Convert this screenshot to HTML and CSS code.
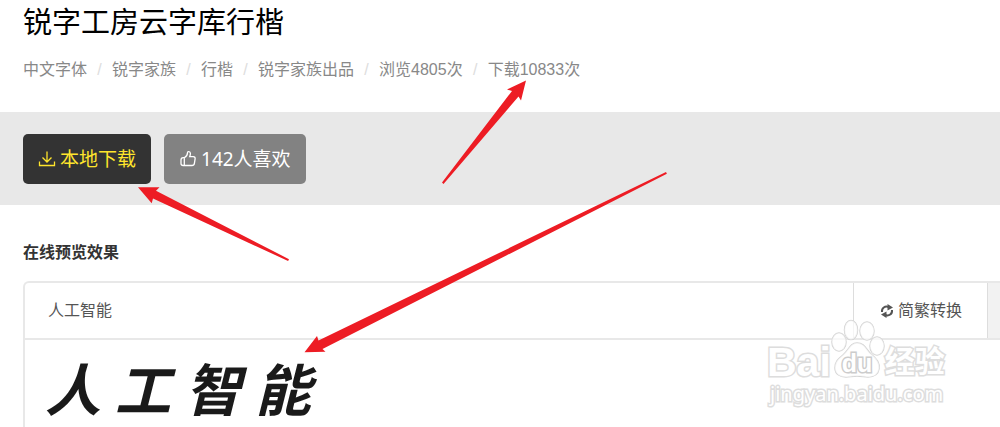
FILE: index.html
```html
<!DOCTYPE html>
<html lang="zh-CN">
<head>
<meta charset="utf-8">
<meta name="viewport" content="width=device-width, initial-scale=1">
<title>锐字工房云字库行楷</title>
<link rel="stylesheet" href="styles.css">
</head>
<body>
<header class="head">
  <h1 class="title">锐字工房云字库行楷</h1>
  <ul class="meta">
    <li>中文字体</li>
    <li>锐字家族</li>
    <li>行楷</li>
    <li>锐字家族出品</li>
    <li>浏览4805次</li>
    <li>下载10833次</li>
  </ul>
</header>
<div class="actions">
  <button class="btn btn-download" type="button">
    <svg class="icon" viewBox="0 0 18 18" aria-hidden="true"><path d="M9 1.500v10.500M4.500 7.500l4.500 4.500 4.500-4.500M1.500 11.500v4h15v-4"/></svg>
    <span>本地下载</span>
  </button>
  <button class="btn btn-like" type="button">
    <svg class="icon" viewBox="0 0 18 18" aria-hidden="true"><path d="M5.300 7.700C7.500 6.500 8.500 5 8.500 2.800c0-1.800 2.700-1.600 2.900.4.100 1.300-.3 2.300-.7 3.400h3.500c1.500 0 2.100 1 1.900 2.300l-.7 4.400c-.2 1.400-1.100 2.200-2.500 2.200H4.200C2.800 15.500 2 14.700 2 13.400v-3.300c0-1.500.8-2.400 2.200-2.400zM5.300 7.700v7.800"/></svg>
    <span>142人喜欢</span>
  </button>
</div>
<main class="preview">
  <h2 class="subtitle"><label for="sample">在线预览效果</label></h2>
  <section class="panel">
    <div class="toolbar">
      <input class="sample" id="sample" type="text" value="人工智能">
      <button class="convert" type="button">
        <svg class="icon-sync" viewBox="0 0 14 14" aria-hidden="true"><path d="M2 8C1.500 4 5 1.500 8.800 3M12 6c.5 4-3 6.500-6.800 5"/><path class="solid" d="M7.500 0 13 3.500 7.500 6.500zM6.500 14 1 10.500 6.500 7.500z"/></svg>
        <span>简繁转换</span>
      </button>
      <div class="rest"></div>
    </div>
    <div class="specimen"><span>人</span><span>工</span><span>智</span><span>能</span></div>
  </section>
</main>
<div class="watermark">
  <div class="brand">
    <span>Bai</span>
    <span class="paw">
      <svg viewBox="0 0 54 60" aria-hidden="true"><ellipse cx="8" cy="23" rx="7" ry="9"/><ellipse cx="20" cy="11" rx="6.500" ry="9.500"/><ellipse cx="36" cy="12" rx="7" ry="9"/><ellipse cx="46" cy="27" rx="7" ry="9"/><path d="M26 24c8 0 9 7 14 11 6 5 9 9 8 15-1 6-6 8-11 8-4 0-6-1-11-1s-7 1-11 1C9 58 4 55 4 49c0-6 3-9 8-13 6-5 7-12 14-12z"/></svg>
      <span class="du">du</span>
    </span>
    <span class="jy">经验</span>
  </div>
  <div class="site">jingyan.baidu.com</div>
</div>
<svg class="arrows" width="1000" height="427" viewBox="0 0 1000 427" aria-hidden="true">
  <path d="M526 80.500 507 89.500l5 1.500L442 182.500l1.500 1.500L518.500 96.500l2.500 4z"/>
  <path d="M138 187.300h21.500l-3.500 3.500L289 259.200l-.9 1.800L153 198.500l-1.300 4.800z"/>
  <path d="M304.500 352.300 317 336l1.500 4.500L666 172l.9 1.800L322.500 349l3 2.800z"/>
</svg>
</body>
</html>
```
FILE: styles.css
```css
* {
  box-sizing: border-box;
}

body {
  margin: 0;
  min-height: 100vh;
  display: flex;
  flex-direction: column;
  position: relative;
  background: #fff;
  color: #333;
  font: 16px/24px "Liberation Sans", "Noto Sans CJK SC", sans-serif;
}

button,
input {
  font: inherit;
  margin: 0;
}

.head {
  padding: 0 23px 30px;
}

.title {
  margin: 0;
  color: #000;
  font-size: 29px;
  font-weight: 400;
  line-height: 46px;
}

.meta {
  display: flex;
  margin: 12px 0 0;
  padding: 0;
  list-style: none;
  color: #888;
}

.meta li + li::before {
  content: "/";
  display: inline-block;
  width: 25px;
  text-align: center;
  color: #ddd;
}

.actions {
  display: flex;
  gap: 13px;
  padding: 22px 23px 21px;
  background: #e8e8e8;
}

.btn {
  display: flex;
  align-items: center;
  gap: 4px;
  height: 50px;
  padding: 0 15px;
  border: 0;
  border-radius: 5px;
  font-family: "Noto Sans", "Noto Sans CJK SC", sans-serif;
  font-size: 19px;
}

.btn-download {
  background: #333;
  color: #ffe52c;
}

.btn-like {
  background: #828282;
  color: #fff;
}

.icon {
  width: 18px;
  height: 18px;
  fill: none;
  stroke: currentColor;
  stroke-width: 1.3;
}

.preview {
  flex: 1;
  display: flex;
  flex-direction: column;
  padding: 36px 0 0 23px;
}

.subtitle {
  margin: 0 0 16px;
  font-size: 16px;
  line-height: 24px;
}

.panel {
  flex: 1;
  border: 2px solid #e8e8e8;
  border-width: 2px 0 0 2px;
  border-radius: 6px 0 0 0;
}

.toolbar {
  display: flex;
  height: 57px;
  border-bottom: 2px solid #e8e8e8;
}

.sample {
  flex: 1;
  min-width: 0;
  padding: 0 23px;
  border: 0;
  background: none;
  color: #555;
}

.convert {
  display: flex;
  align-items: center;
  gap: 4px;
  padding: 0 25px 0 26px;
  border: 0;
  border-left: 1px solid #ddd;
  border-right: 1px solid #ddd;
  background: #fff;
  color: #555;
}

.icon-sync {
  width: 14px;
  height: 14px;
  fill: none;
  stroke: #555;
  stroke-width: 2;
}

.icon-sync .solid {
  fill: #555;
  stroke: none;
}

.rest {
  width: 12px;
  background: #f2f2f2;
}

.specimen {
  display: flex;
  gap: 14px;
  padding: 8px 20px 0;
  color: #1a1a1a;
  font: italic 700 56px/78px "Noto Sans CJK SC", sans-serif;
}

.watermark {
  position: absolute;
  left: 767px;
  top: 319px;
  color: #fff;
  -webkit-text-stroke: 3px #ddd;
  paint-order: stroke fill;
}

.brand {
  display: flex;
  align-items: flex-end;
  font: 700 41px/34px "Liberation Sans", "Noto Sans CJK SC", sans-serif;
}

.paw {
  position: relative;
  width: 54px;
  height: 60px;
}

.paw svg {
  display: block;
  width: 54px;
  height: 60px;
  fill: #fff;
  fill-opacity: 0.7;
  stroke: #d4d4d4;
  stroke-width: 1.5;
}

.du {
  position: absolute;
  left: 11px;
  top: 30px;
  font-size: 25px;
  line-height: 28px;
  -webkit-text-stroke-color: #ccc;
}

.jy {
  font-size: 30px;
}

.site {
  padding-left: 3px;
  font: 20px/30px "Noto Sans", sans-serif;
}

.arrows {
  position: absolute;
  left: 0;
  top: 0;
  fill: #ed1c24;
  pointer-events: none;
}
```
